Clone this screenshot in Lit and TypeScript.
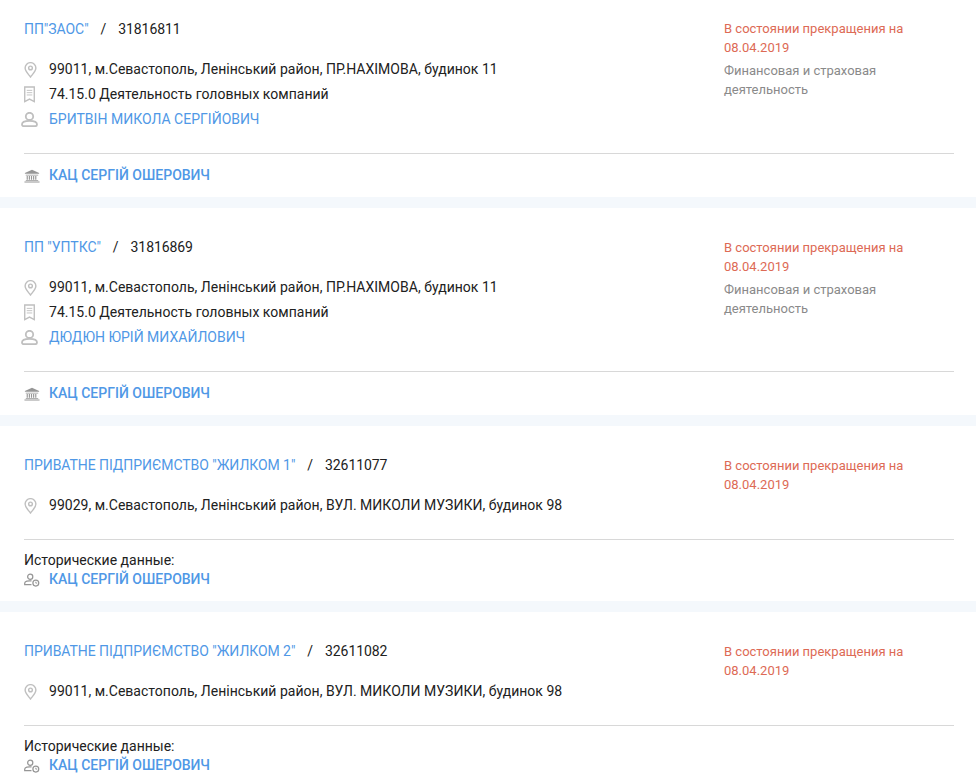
import { LitElement, html, css, nothing } from "lit";
import { customElement } from "lit/decorators.js";

interface Company {
  name: string;
  code: string;
  address: string;
  activity?: string;
  head?: string;
  sector?: boolean;
  historic?: boolean;
}

const companies: Company[] = [
  {
    name: 'ПП"ЗАОС"',
    code: "31816811",
    address: "99011, м.Севастополь, Ленінський район, ПР.НАХІМОВА, будинок 11",
    activity: "74.15.0 Деятельность головных компаний",
    head: "БРИТВІН МИКОЛА СЕРГІЙОВИЧ",
    sector: true,
  },
  {
    name: 'ПП "УПТКС"',
    code: "31816869",
    address: "99011, м.Севастополь, Ленінський район, ПР.НАХІМОВА, будинок 11",
    activity: "74.15.0 Деятельность головных компаний",
    head: "ДЮДЮН ЮРІЙ МИХАЙЛОВИЧ",
    sector: true,
  },
  {
    name: 'ПРИВАТНЕ ПІДПРИЄМСТВО "ЖИЛКОМ 1"',
    code: "32611077",
    address: "99029, м.Севастополь, Ленінський район, ВУЛ. МИКОЛИ МУЗИКИ, будинок 98",
    historic: true,
  },
  {
    name: 'ПРИВАТНЕ ПІДПРИЄМСТВО "ЖИЛКОМ 2"',
    code: "32611082",
    address: "99011, м.Севастополь, Ленінський район, ВУЛ. МИКОЛИ МУЗИКИ, будинок 98",
    historic: true,
  },
];

const pin = html`<svg width="13" height="16" viewBox="0 0 14 17" fill="none" stroke="#bfbfbf" stroke-width="1.5">
  <path d="M7 16C4.5 12.8 1.2 9.8 1.2 6.4a5.8 5.8 0 0 1 11.6 0C12.8 9.8 9.5 12.8 7 16z" />
  <circle cx="7" cy="6.3" r="2" />
</svg>`;

const bookmark = html`<svg width="11" height="17" viewBox="0 0 12 18" fill="none" stroke="#bfbfbf" stroke-width="1.5">
  <path d="M.8.8h10.4v16L6 14 .8 16.8z" />
  <path d="M3 4.5h6M3 7h6M3 9.5h6" stroke-width="1" />
</svg>`;

const person = html`<svg width="17" height="15" viewBox="0 0 17 15" fill="none" stroke="#bfbfbf" stroke-width="1.8">
  <ellipse cx="8.5" cy="4.4" rx="3.7" ry="3.6" />
  <path d="M1 12.2c0-2.2 3-3.4 7.5-3.4s7.5 1.2 7.5 3.4c0 1.2-.6 2-1.8 2H2.8C1.6 14.2 1 13.4 1 12.2z" />
</svg>`;

const bank = html`<svg width="16" height="14" viewBox="0 0 18 15" fill="#969696">
  <path d="M9 .5 17 4v1H1V4z" />
  <path d="M2 6h14v.9H2zM3 7.6h1.3v4.2H3zM5.4 7.6h1.3v4.2H5.4zM7.8 7.6h1.3v4.2H7.8zM10.2 7.6h1.3v4.2h-1.3zM12.6 7.6h1.3v4.2h-1.3zM2 12.3h14v.9H2zM.5 13.8h17v1H.5z" />
</svg>`;

const personClock = html`<svg width="16" height="14" viewBox="0 0 18 15" fill="none" stroke="#969696" stroke-width="1.4">
  <ellipse cx="7" cy="3.8" rx="2.9" ry="3" />
  <path d="M8.5 8.6C4.5 8 1 9 .8 11v1.6h7.6" />
  <circle cx="13.3" cy="11" r="3.3" />
  <path d="M13.3 9.4V11h1.5" stroke-width="1" />
</svg>`;

@customElement("app-root")
export class AppRoot extends LitElement {
  static styles = css`
    :host {
      display: block;
      background: #f4f8fc;
      font-family: Roboto, "Liberation Sans", sans-serif;
      font-size: 14px;
      line-height: 21px;
      color: #212121;
      height: 783px;
      overflow: hidden;
    }
    a {
      color: #4f98e6;
      text-decoration: none;
    }
    .card {
      background: #fff;
      padding: 29px 22px 0 24px;
      margin-bottom: 11px;
    }
    .card:first-child {
      padding-top: 19px;
    }
    .top {
      display: flex;
      justify-content: space-between;
    }
    .main {
      flex: 1;
    }
    .title a {
      letter-spacing: -0.06px;
    }
    .title .sep {
      margin: 0 8.5px;
    }
    .title .code {
      letter-spacing: -0.1px;
    }
    .rows {
      margin-top: 19px;
      display: flex;
      flex-direction: column;
      gap: 4px;
    }
    .row {
      display: flex;
      align-items: center;
      height: 21px;
      letter-spacing: 0.015px;
    }
    .icon {
      width: 25px;
      flex: none;
      display: flex;
    }
    .icon.person {
      margin-left: -3px;
      width: 28px;
    }
    .side {
      width: 230px;
      flex: none;
      font-size: 13px;
      font-weight: 400;
      line-height: 18.5px;
      padding-top: 2px;
    }
    .card:first-child .side {
      padding-top: 1px;
    }
    .status {
      color: #dd6a55;
    }
    .sector {
      color: #8a8a8a;
      margin-top: 5px;
    }
    .footer {
      border-top: 1px solid #d8d8d8;
      margin-top: 23px;
      padding: 11px 0 11px;
    }
    .card.plain .footer {
      padding: 11px 0 12px;
    }
    .historic-label {
      line-height: 19px;
    }
    .owner {
      font-weight: 500;
    }
    .owner-row {
      display: flex;
      align-items: center;
      height: 19px;
    }
    .footer.sector-owner .owner-row {
      height: 21px;
    }
  `;

  renderCard(c: Company) {
    return html`
      <div class="card ${c.historic ? "plain" : ""}">
        <div class="top">
          <div class="main">
            <div class="title"><a href="#">${c.name}</a><span class="sep"> / </span><span class="code">${c.code}</span></div>
            <div class="rows">
              <div class="row"><span class="icon">${pin}</span>${c.address}</div>
              ${c.activity
                ? html`<div class="row"><span class="icon">${bookmark}</span>${c.activity}</div>`
                : nothing}
              ${c.head
                ? html`<div class="row"><span class="icon person">${person}</span><a href="#">${c.head}</a></div>`
                : nothing}
            </div>
          </div>
          <div class="side">
            <div class="status">В состоянии прекращения на<br />08.04.2019</div>
            ${c.sector ? html`<div class="sector">Финансовая и страховая<br />деятельность</div>` : nothing}
          </div>
        </div>
        ${c.historic
          ? html`<div class="footer">
              <div class="historic-label">Исторические данные:</div>
              <div class="owner-row"><span class="icon">${personClock}</span><a class="owner" href="#">КАЦ СЕРГІЙ ОШЕРОВИЧ</a></div>
            </div>`
          : html`<div class="footer sector-owner">
              <div class="owner-row"><span class="icon">${bank}</span><a class="owner" href="#">КАЦ СЕРГІЙ ОШЕРОВИЧ</a></div>
            </div>`}
      </div>
    `;
  }

  render() {
    return html`${companies.map((c) => this.renderCard(c))}`;
  }
}
